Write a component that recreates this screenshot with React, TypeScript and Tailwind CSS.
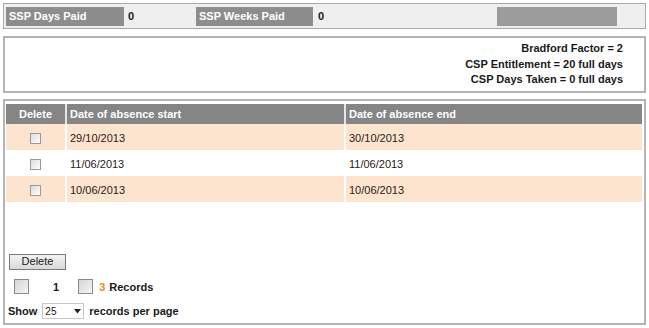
import React from 'react'

const rows = [
  { start: '29/10/2013', end: '30/10/2013', shaded: true },
  { start: '11/06/2013', end: '11/06/2013', shaded: false },
  { start: '10/06/2013', end: '10/06/2013', shaded: true },
]

function Check() {
  return (
    <span className="inline-block w-[11px] h-[11px] border border-[#9a9a9a] bg-gradient-to-br from-[#dcdcdc] to-white" />
  )
}

export default function App() {
  return (
    <div className="w-[649px] h-[328px] bg-white text-[11px] text-[#1a1a1a] font-['Liberation_Sans',Arial,sans-serif] pt-[3px] overflow-hidden">
      {/* SSP summary strip */}
      <div className="mx-[3px] h-[26px] border border-[#a8a8a8] bg-[#efefef] flex items-center px-[2px]">
        <div className="w-[118px] h-[19px] bg-[#8d8d8d] text-white font-bold flex items-center pl-[3px]">SSP Days Paid</div>
        <div className="w-[72px] font-bold pl-[4px]">0</div>
        <div className="w-[117px] h-[19px] bg-[#8d8d8d] text-white font-bold flex items-center pl-[3px]">SSP Weeks Paid</div>
        <div className="w-[184px] font-bold pl-[5px]">0</div>
        <div className="w-[120px] h-[19px] bg-[#9c9c9c]" />
      </div>

      {/* Bradford / CSP box */}
      <div className="mx-[3px] mt-[7px] h-[57px] border-2 border-[#b4b4b4] bg-white flex flex-col items-end justify-center pr-[21px] font-bold leading-[15.5px]">
        <div>Bradford Factor = 2</div>
        <div>CSP Entitlement = 20 full days</div>
        <div>CSP Days Taken = 0 full days</div>
      </div>

      {/* Absence table */}
      <div className="mx-[3px] mt-[6px] h-[226px] border-2 border-[#b4b4b4] bg-white px-[1px] pt-[3px] flex flex-col">
        <table className="w-[636px] border-collapse">
          <thead>
            <tr className="bg-[#858585] text-white font-bold h-[20px]">
              <th className="w-[60px] text-center font-bold border-r-2 border-[#e6e6e6]">Delete</th>
              <th className="w-[279px] text-left font-bold pl-[3px] border-r-2 border-[#e6e6e6]">Date of absence start</th>
              <th className="text-left font-bold pl-[3px]">Date of absence end</th>
            </tr>
          </thead>
          <tbody>
            {rows.map((r, i) => (
              <tr key={i} className={r.shaded ? 'bg-[#fde4cf] h-[26px]' : 'bg-white h-[26px]'}>
                <td className="text-center border-r-2 border-white align-middle">
                  <div className="flex justify-center pt-[3px]"><Check /></div>
                </td>
                <td className="pl-[3px] pt-[2px] text-[#2a2118] border-r-2 border-white">{r.start}</td>
                <td className="pl-[3px] pt-[2px] text-[#2a2118]">{r.end}</td>
              </tr>
            ))}
          </tbody>
        </table>

        <div className="mt-[51px] ml-[3px]">
          <button className="w-[57px] h-[16px] border border-[#7a7a7a] bg-gradient-to-b from-[#f4f4f4] to-[#d8d8d8] text-[11px] leading-none text-[#222]">
            Delete
          </button>
        </div>

        <div className="mt-[9px] ml-[8px] flex items-center font-bold">
          <span className="w-[15px] h-[15px] border border-[#8a8a8a] bg-gradient-to-br from-[#d4d4d4] to-[#f6f6f6]" />
          <span className="ml-[24px]">1</span>
          <span className="ml-[19px] w-[15px] h-[15px] border border-[#8a8a8a] bg-gradient-to-br from-[#d4d4d4] to-[#f6f6f6]" />
          <span className="ml-[6px] text-[#e58a1e]">3</span>
          <span className="ml-[4px]">Records</span>
        </div>

        <div className="mt-[8px] ml-[2px] flex items-center font-bold">
          <span>Show</span>
          <span className="ml-[5px] w-[42px] h-[16px] border border-[#c8c8c8] bg-white flex items-center justify-between px-[2px] font-normal text-[10px]">
            <span>25</span>
            <svg width="7" height="5" viewBox="0 0 7 5"><path d="M0 0h7L3.5 4.5z" fill="#222" /></svg>
          </span>
          <span className="ml-[5px]">records per page</span>
        </div>
      </div>
    </div>
  )
}
